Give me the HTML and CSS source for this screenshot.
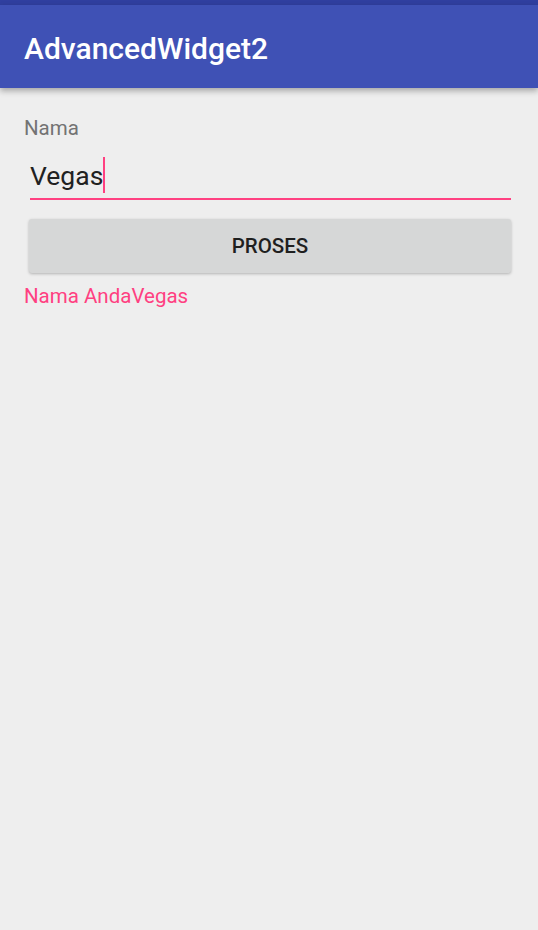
FILE: index.html
```
<!DOCTYPE html>
<html>
<head>
<meta charset="utf-8">
<link rel="stylesheet" href="styles.css">
</head>
<body>
<div class="status"></div>
<header class="appbar"><span class="title">AdvancedWidget2</span></header>
<main class="content">
  <div class="label">Nama</div>
  <div class="field"><span class="value">Vegas</span><span class="cursor"></span></div>
  <button class="btn">PROSES</button>
  <div class="result">Nama AndaVegas</div>
</main>
</body>
</html>
```
FILE: styles.css
```
html, body { margin: 0; padding: 0; }
body {
  width: 538px; height: 930px; background: #eeeeee;
  font-family: Roboto, "Noto Sans", sans-serif; overflow: hidden;
}
.status { height: 5px; background: #303f9f; }
.appbar {
  height: 83px; background: #3f51b5; display: flex; align-items: center;
  padding-left: 24px; box-shadow: 0 3px 6px rgba(0,0,0,0.3); position: relative; z-index: 1;
}
.title { color: #fff; font-size: 30px; font-weight: 500; margin-top: 4px; }
.content { padding: 28px 27px 0 24px; display: flex; flex-direction: column; }
.label { color: #737373; font-size: 20.5px; line-height: 24px; }
.field {
  margin: 12px 0 0 6px; height: 46px; border-bottom: 2px solid #ff4081;
  display: flex; align-items: center;
}
.value { font-size: 26.5px; color: #212121; }
.cursor { width: 2px; height: 36px; background: #ff4081; }
.btn {
  margin: 19px 0 0 5px; height: 54px; border: none; border-radius: 3px;
  background: #d6d7d7; color: #1f1f1f; font-family: Roboto, sans-serif;
  font-size: 20.5px; font-weight: 500; box-shadow: 0 1px 3px rgba(0,0,0,0.25);
}
.result { color: #ff4081; font-size: 20.5px; margin-top: 11px; }
```
